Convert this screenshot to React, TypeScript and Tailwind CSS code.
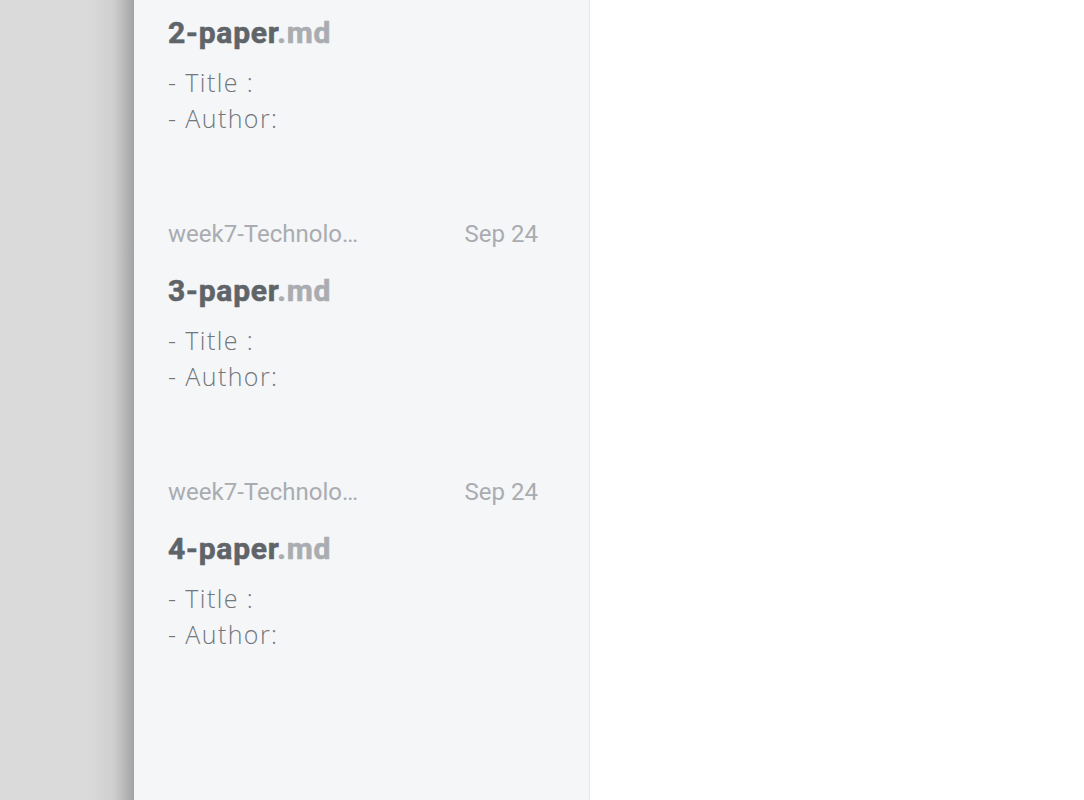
import React from "react";

const items = [
  { name: "2-paper", folder: "week7-Technolo…", date: "Sep 24", meta: false },
  { name: "3-paper", folder: "week7-Technolo…", date: "Sep 24", meta: true },
  { name: "4-paper", folder: "week7-Technolo…", date: "Sep 24", meta: true },
];

export default function App() {
  return (
    <div className="flex h-[800px] w-[1084px] overflow-hidden bg-white">
      <div className="h-full w-[134px] shrink-0 bg-linear-to-r from-[#dadada] from-65% via-[#cfcfcf] via-85% to-[#a3a3a3]" />
      <div className="h-full w-[456px] shrink-0 overflow-hidden border-r border-[#e4e7eb] bg-[#f5f6f8] pl-[34px] pr-[51px] pt-[13px]">
        <div className="flex flex-col">
          {items.map((it, i) => (
            <div key={i} className="flex flex-col pb-[82px]">
              {it.meta && (
                <div
                  className="mb-[21px] flex h-[32px] items-center justify-between whitespace-nowrap text-[24px] leading-[32px] text-[#a9acb0]"
                  style={{ fontFamily: "Roboto, sans-serif" }}
                >
                  <span>{it.folder}</span>
                  <span>{it.date}</span>
                </div>
              )}
              <div
                className="h-[40px] text-[30px] font-bold leading-[40px] tracking-[0.8px] text-[#5f6469] [-webkit-text-stroke:0.6px_#5f6469]"
                style={{ fontFamily: "Roboto, sans-serif" }}
              >
                {it.name}
                <span className="text-[#a9acb0] [-webkit-text-stroke:0.6px_#a9acb0]">.md</span>
              </div>
              <div
                className="mt-[11px] text-[25px] font-light leading-[36px] tracking-[1.4px] text-[#72777c]"
                style={{ fontFamily: "'Open Sans', sans-serif" }}
              >
                <div>- Title :</div>
                <div>- Author:</div>
              </div>
            </div>
          ))}
        </div>
      </div>
      <div className="h-full flex-1 bg-white" />
    </div>
  );
}
